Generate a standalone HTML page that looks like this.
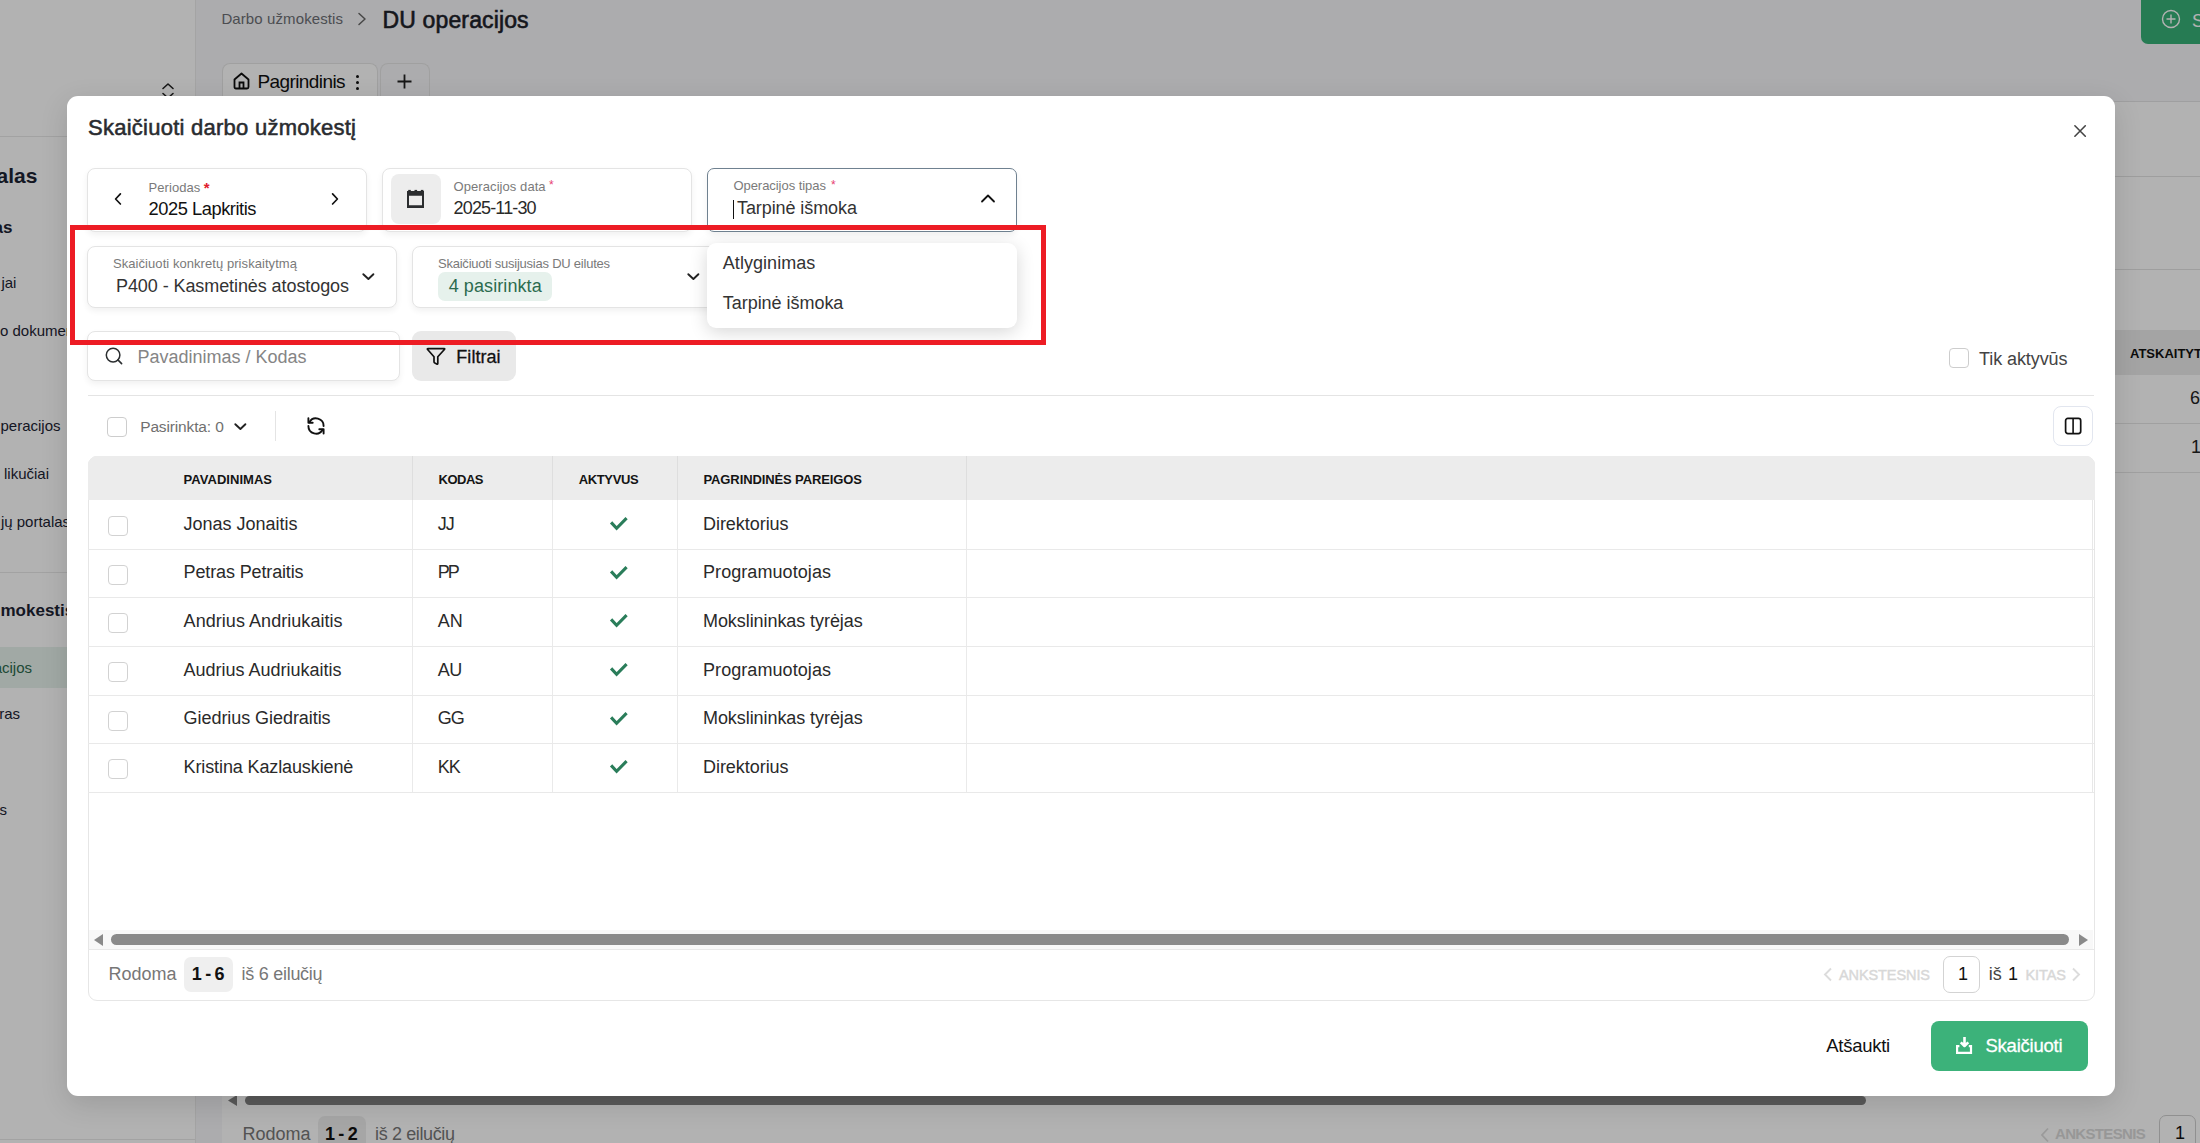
<!DOCTYPE html>
<html><head><meta charset="utf-8"><style>
html,body{margin:0;padding:0;width:2200px;height:1143px;overflow:hidden;background:#fff}
body{position:relative;font-family:"Liberation Sans",sans-serif}
.t{position:absolute;white-space:pre;line-height:1;font-family:"Liberation Sans",sans-serif}
.r{position:absolute}
</style></head><body>
<div class="r" style="left:0px;top:0px;width:2200px;height:1143px;background:#f6f6f9"></div>
<div class="r" style="left:0px;top:0px;width:195px;height:1143px;background:#fff;border-right:1px solid #ebebeb"></div>
<div class="r" style="left:0px;top:136px;width:195px;height:1px;background:#e8e8e8"></div>
<div class="r" style="left:0px;top:572px;width:195px;height:1px;background:#e8e8e8"></div>
<div class="r" style="left:0px;top:1139px;width:195px;height:1px;background:#e8e8e8"></div>
<div class="r" style="left:0px;top:647px;width:195px;height:41px;background:#e7f2ec"></div>
<div class="t" style="left:-45.40px;top:164.52px;font-size:21px;font-weight:700;color:#1c2333;letter-spacing:0.000px;">Portalas</div>
<div class="t" style="left:-83.89px;top:218.91px;font-size:17px;font-weight:700;color:#1c2333;letter-spacing:0.000px;">Nustatymas</div>
<div class="t" style="left:1.38px;top:275.30px;font-size:15px;font-weight:400;color:#1c2333;letter-spacing:0.000px;">jai</div>
<div class="t" style="left:0.00px;top:323.30px;font-size:15px;font-weight:400;color:#1c2333;letter-spacing:0.000px;">o dokumentai</div>
<div class="t" style="left:0.50px;top:418.30px;font-size:15px;font-weight:400;color:#1c2333;letter-spacing:0.000px;">peracijos</div>
<div class="t" style="left:-21.84px;top:466.30px;font-size:15px;font-weight:400;color:#1c2333;letter-spacing:0.000px;">DU likučiai</div>
<div class="t" style="left:0.88px;top:514.30px;font-size:15px;font-weight:400;color:#1c2333;letter-spacing:0.000px;">jų portalas</div>
<div class="t" style="left:0.50px;top:601.61px;font-size:17px;font-weight:700;color:#1c2333;letter-spacing:0.000px;">mokestis</div>
<div class="t" style="left:-62.20px;top:660.30px;font-size:15px;font-weight:400;color:#2c6a4c;letter-spacing:0.000px;">DU operacijos</div>
<div class="t" style="left:-48.36px;top:706.30px;font-size:15px;font-weight:400;color:#1c2333;letter-spacing:0.000px;">Struktūras</div>
<div class="t" style="left:-62.19px;top:802.30px;font-size:15px;font-weight:400;color:#1c2333;letter-spacing:0.000px;">Ataskaitos</div>
<svg class="r" style="left:160px;top:82px;" width="16" height="18" viewBox="0 0 16 18" fill="none"><path d="M3 6.5 L8 2 L13 6.5 M3 11.5 L8 16 L13 11.5" stroke="#222" stroke-width="1.6" stroke-linecap="round" stroke-linejoin="round"/></svg>
<div class="t" style="left:221.40px;top:11.40px;font-size:15px;font-weight:400;color:#6d6f75;letter-spacing:0.104px;">Darbo užmokestis</div>
<svg class="r" style="left:356px;top:12px;" width="12" height="14" viewBox="0 0 12 14" fill="none"><path d="M3 1.5 L9 7 L3 12.5" stroke="#666" stroke-width="1.5" stroke-linecap="round" stroke-linejoin="round"/></svg>
<div class="t" style="left:382.60px;top:8.93px;font-size:23px;font-weight:400;color:#1e222a;letter-spacing:0.130px;-webkit-text-stroke:0.6px #1e222a;">DU operacijos</div>
<div class="r" style="left:222px;top:63px;width:156px;height:47px;background:#fff;border:1px solid #e6e6e6;border-bottom:none;border-radius:8px 8px 0 0;box-sizing:border-box"></div>
<div class="r" style="left:380px;top:63px;width:50px;height:47px;background:#f6f6f9;border:1px solid #e6e6e6;border-bottom:none;border-radius:8px 8px 0 0;box-sizing:border-box"></div>
<svg class="r" style="left:232px;top:71px;" width="19" height="19" viewBox="0 0 19 19" fill="none"><path d="M2.5 8.5 L9.5 2.5 L16.5 8.5 V16 Q16.5 17.5 15 17.5 H4 Q2.5 17.5 2.5 16 Z" stroke="#111" stroke-width="1.8" stroke-linejoin="round"/><path d="M7.5 17.5 V11.5 H11.5 V17.5" stroke="#111" stroke-width="1.8"/></svg>
<div class="t" style="left:257.50px;top:72.42px;font-size:19px;font-weight:400;color:#111;letter-spacing:-0.600px;">Pagrindinis</div>
<div class="r" style="left:356px;top:75px;width:3px;height:3px;background:#111;border-radius:50%"></div>
<div class="r" style="left:356px;top:81px;width:3px;height:3px;background:#111;border-radius:50%"></div>
<div class="r" style="left:356px;top:87px;width:3px;height:3px;background:#111;border-radius:50%"></div>
<svg class="r" style="left:396px;top:73px;" width="17" height="17" viewBox="0 0 17 17" fill="none"><path d="M8.5 1.5 V15.5 M1.5 8.5 H15.5" stroke="#222" stroke-width="1.8"/></svg>
<div class="r" style="left:195px;top:101px;width:2005px;height:1px;background:#e4e4e6"></div>
<div class="r" style="left:222px;top:102px;width:1978px;height:1041px;background:#fff"></div>
<div class="r" style="left:2115px;top:176px;width:85px;height:1px;background:#e2e2e2"></div>
<div class="r" style="left:2115px;top:269px;width:85px;height:1px;background:#e2e2e2"></div>
<div class="r" style="left:2115px;top:330px;width:85px;height:45px;background:#ebebeb"></div>
<div class="t" style="left:2130.00px;top:346.60px;font-size:13px;font-weight:700;color:#111;letter-spacing:0.000px;">ATSKAITYTA</div>
<div class="t" style="left:2190.01px;top:388.76px;font-size:18px;font-weight:400;color:#222;letter-spacing:0.000px;">6</div>
<div class="t" style="left:2191.01px;top:437.76px;font-size:18px;font-weight:400;color:#222;letter-spacing:0.000px;">1</div>
<div class="r" style="left:2115px;top:423px;width:85px;height:1px;background:#e6e6e6"></div>
<div class="r" style="left:2115px;top:472px;width:85px;height:1px;background:#e6e6e6"></div>
<div class="r" style="left:2141px;top:-10px;width:99px;height:54px;background:#37b077;border-radius:7px"></div>
<svg class="r" style="left:2161px;top:9px;" width="20" height="20" viewBox="0 0 20 20" fill="none"><circle cx="10" cy="10" r="8.5" stroke="#fff" stroke-width="1.4"/><path d="M10 5.5 V14.5 M5.5 10 H14.5" stroke="#fff" stroke-width="1.4"/></svg>
<div class="t" style="left:2192.00px;top:11.76px;font-size:18px;font-weight:400;color:#fff;letter-spacing:0.000px;">Sukurti</div>
<div class="r" style="left:222px;top:1090px;width:1978px;height:53px;background:#fff"></div>
<svg class="r" style="left:228px;top:1095px;" width="9" height="11" viewBox="0 0 9 11" fill="none"><path d="M9 0 L0 5.5 L9 11 Z" fill="#808080"/></svg>
<div class="r" style="left:245px;top:1096px;width:1621px;height:9px;background:#808080;border-radius:5px"></div>
<div class="t" style="left:242.50px;top:1125.26px;font-size:18px;font-weight:400;color:#777;letter-spacing:-0.008px;">Rodoma</div>
<div class="r" style="left:318px;top:1116px;width:48px;height:34px;background:#eee;border-radius:7px"></div>
<div class="t" style="left:325.00px;top:1125.26px;font-size:18px;font-weight:700;color:#111;letter-spacing:-0.825px;">1 - 2</div>
<div class="t" style="left:375.00px;top:1125.26px;font-size:18px;font-weight:400;color:#777;letter-spacing:-0.369px;">iš 2 eilučių</div>
<div class="t" style="left:2055.00px;top:1126.30px;font-size:15px;font-weight:700;color:#d9d9d9;letter-spacing:-0.664px;">ANKSTESNIS</div>
<svg class="r" style="left:2040px;top:1127px;" width="10" height="16" viewBox="0 0 10 16" fill="none"><path d="M8 1.5 L2 8 L8 14.5" stroke="#ddd" stroke-width="1.8"/></svg>
<div class="r" style="left:2159px;top:1115px;width:37px;height:45px;background:#fff;border:1px solid #cfcfcf;border-radius:7px;box-sizing:border-box"></div>
<div class="t" style="left:2175.00px;top:1123.76px;font-size:18px;font-weight:400;color:#111;letter-spacing:0.000px;">1</div>
<div class="r" style="left:0px;top:0px;width:2200px;height:1143px;background:rgba(0,0,0,0.3)"></div>
<div class="r" style="left:67px;top:96px;width:2048px;height:1000px;background:#fff;border-radius:11px;box-shadow:0 8px 28px rgba(0,0,0,0.13)"></div>
<div class="t" style="left:88.00px;top:117.38px;font-size:22px;font-weight:400;color:#2a2c30;letter-spacing:0.252px;-webkit-text-stroke:0.55px #2a2c30;">Skaičiuoti darbo užmokestį</div>
<svg class="r" style="left:2064px;top:114px;" width="32" height="32" viewBox="0 0 32 32" fill="none"><path d="M10.9 11.8 L21.3 22.2 M21.3 11.8 L10.9 22.2" stroke="#444" stroke-width="1.6" stroke-linecap="round"/></svg>
<div class="r" style="left:87px;top:168px;width:280px;height:64px;background:#fff;border:1px solid #e4e4e4;border-radius:8px;box-sizing:border-box;box-shadow:0 3px 6px rgba(0,0,0,0.06)"></div>
<svg class="r" style="left:104px;top:183px;" width="32" height="32" viewBox="0 0 32 32" fill="none"><path d="M16.4 10.9 L11.6 16 L16.4 21" stroke="#111" stroke-width="1.7" stroke-linecap="round" stroke-linejoin="round"/></svg>
<svg class="r" style="left:319px;top:183px;" width="32" height="32" viewBox="0 0 32 32" fill="none"><path d="M13.6 10.9 L18.4 16 L13.6 21" stroke="#111" stroke-width="1.7" stroke-linecap="round" stroke-linejoin="round"/></svg>
<div class="t" style="left:148.60px;top:181.00px;font-size:13px;font-weight:400;color:#7a7a7a;letter-spacing:0.055px;">Periodas</div>
<div class="t" style="left:203.70px;top:179.60px;font-size:15px;font-weight:700;color:#e0202c;letter-spacing:0.000px;">*</div>
<div class="t" style="left:148.60px;top:199.71px;font-size:18.3px;font-weight:400;color:#111;letter-spacing:-0.459px;">2025 Lapkritis</div>
<div class="r" style="left:382px;top:168px;width:310px;height:64px;background:#fff;border:1px solid #e4e4e4;border-radius:8px;box-sizing:border-box;box-shadow:0 3px 6px rgba(0,0,0,0.06)"></div>
<div class="r" style="left:391px;top:174px;width:50px;height:50px;background:#ededed;border-radius:8px"></div>
<svg class="r" style="left:400px;top:183px;" width="32" height="32" viewBox="0 0 32 32" fill="none"><path fill-rule="evenodd" d="M7 8 H24 V25 H7 Z M9 12.8 H22 V22.2 H9 Z" fill="#2b2d2f"/><rect x="8.2" y="6.9" width="2.6" height="1.5" fill="#2b2d2f"/><rect x="14.5" y="6.9" width="2.6" height="1.5" fill="#2b2d2f"/><rect x="20.8" y="6.9" width="2.6" height="1.5" fill="#2b2d2f"/></svg>
<div class="t" style="left:453.60px;top:179.50px;font-size:13px;font-weight:400;color:#7a7a7a;letter-spacing:0.067px;">Operacijos data</div>
<div class="t" style="left:549.00px;top:178.84px;font-size:12px;font-weight:400;color:#e63e72;letter-spacing:0.000px;">*</div>
<div class="t" style="left:453.60px;top:198.76px;font-size:18px;font-weight:400;color:#2a2a2a;letter-spacing:-0.858px;">2025-11-30</div>
<div class="r" style="left:707px;top:168px;width:310px;height:64px;background:#fff;border:1px solid #6f8190;border-radius:7px;box-sizing:border-box;box-shadow:0 3px 6px rgba(0,0,0,0.06)"></div>
<div class="t" style="left:733.40px;top:179.30px;font-size:13px;font-weight:400;color:#7a7a7a;letter-spacing:-0.041px;">Operacijos tipas</div>
<div class="t" style="left:831.00px;top:178.84px;font-size:12px;font-weight:400;color:#e63e72;letter-spacing:0.000px;">*</div>
<div class="r" style="left:733px;top:200px;width:1px;height:19px;background:#111"></div>
<div class="t" style="left:737.00px;top:199.46px;font-size:18px;font-weight:400;color:#333;letter-spacing:-0.084px;">Tarpinė išmoka</div>
<svg class="r" style="left:980px;top:193px;" width="16" height="11" viewBox="0 0 16 11" fill="none"><path d="M2 8.5 L8 2.5 L14 8.5" stroke="#111" stroke-width="1.8" stroke-linecap="round" stroke-linejoin="round"/></svg>
<div class="r" style="left:87px;top:246px;width:310px;height:62px;background:#fff;border:1px solid #e4e4e4;border-radius:8px;box-sizing:border-box;box-shadow:0 3px 6px rgba(0,0,0,0.06)"></div>
<div class="t" style="left:113.00px;top:257.00px;font-size:13px;font-weight:400;color:#7a7a7a;letter-spacing:0.061px;">Skaičiuoti konkretų priskaitytmą</div>
<div class="t" style="left:116.00px;top:276.76px;font-size:18px;font-weight:400;color:#333;letter-spacing:-0.082px;">P400 - Kasmetinės atostogos</div>
<svg class="r" style="left:352px;top:260px;" width="32" height="32" viewBox="0 0 32 32" fill="none"><path d="M11.3 14.2 L16.4 19 L21.4 14.2" stroke="#222" stroke-width="1.9" stroke-linecap="round" stroke-linejoin="round"/></svg>
<div class="r" style="left:412px;top:246px;width:309px;height:62px;background:#fff;border:1px solid #e4e4e4;border-radius:8px;box-sizing:border-box;box-shadow:0 3px 6px rgba(0,0,0,0.06)"></div>
<div class="t" style="left:438.00px;top:257.00px;font-size:13px;font-weight:400;color:#7a7a7a;letter-spacing:-0.231px;">Skaičiuoti susijusias DU eilutes</div>
<div class="r" style="left:438px;top:272px;width:114px;height:29px;background:#e6f1ec;border-radius:7px"></div>
<div class="t" style="left:448.70px;top:276.56px;font-size:18px;font-weight:400;color:#2c6b4f;letter-spacing:0.085px;">4 pasirinkta</div>
<svg class="r" style="left:677px;top:260px;" width="32" height="32" viewBox="0 0 32 32" fill="none"><path d="M11.3 14.2 L16.4 19 L21.4 14.2" stroke="#222" stroke-width="1.9" stroke-linecap="round" stroke-linejoin="round"/></svg>
<div class="r" style="left:707px;top:243px;width:310px;height:85px;background:#fff;border-radius:9px;box-shadow:0 4px 18px rgba(0,0,0,0.16)"></div>
<div class="t" style="left:722.80px;top:254.06px;font-size:18px;font-weight:400;color:#333;letter-spacing:0.048px;">Atlyginimas</div>
<div class="t" style="left:722.80px;top:293.56px;font-size:18px;font-weight:400;color:#333;letter-spacing:-0.038px;">Tarpinė išmoka</div>
<div class="r" style="left:87px;top:331px;width:313px;height:50px;background:#fff;border:1px solid #e4e4e4;border-radius:8px;box-sizing:border-box;box-shadow:0 3px 6px rgba(0,0,0,0.06)"></div>
<svg class="r" style="left:98px;top:340px;" width="32" height="32" viewBox="0 0 32 32" fill="none"><circle cx="15.1" cy="15.1" r="6.8" stroke="#2b2e30" stroke-width="1.5"/><path d="M19.9 19.9 L23.6 23.6" stroke="#2b2e30" stroke-width="1.6" stroke-linecap="round"/></svg>
<div class="t" style="left:137.50px;top:347.76px;font-size:18px;font-weight:400;color:#858585;letter-spacing:-0.006px;">Pavadinimas / Kodas</div>
<div class="r" style="left:412px;top:331px;width:104px;height:50px;background:#e9e9e9;border-radius:9px"></div>
<svg class="r" style="left:420px;top:340px;" width="32" height="32" viewBox="0 0 32 32" fill="none"><path d="M8 8.6 H24.1 Q25.2 8.6 24.4 9.5 L17.8 16.8 V23.2 Q17.8 24.5 16.7 24 L14.9 23.1 Q14 22.6 14 21.7 V16.8 L7.6 9.5 Q6.9 8.6 8 8.6 Z" stroke="#111" stroke-width="1.7" stroke-linejoin="round"/></svg>
<div class="t" style="left:456.30px;top:347.76px;font-size:18px;font-weight:400;color:#111;letter-spacing:0.048px;-webkit-text-stroke:0.3px #111;">Filtrai</div>
<div class="r" style="left:1949px;top:348px;width:20px;height:20px;background:#fff;border:1px solid #cdcdcd;border-radius:4px;box-sizing:border-box"></div>
<div class="t" style="left:1979.00px;top:349.96px;font-size:18px;font-weight:400;color:#444;letter-spacing:-0.087px;">Tik aktyvūs</div>
<div class="r" style="left:88px;top:395px;width:2006px;height:1px;background:#e4e4e4"></div>
<div class="r" style="left:107px;top:417px;width:20px;height:20px;background:#fff;border:1px solid #cdcdcd;border-radius:4px;box-sizing:border-box"></div>
<div class="t" style="left:140.20px;top:419.18px;font-size:15.5px;font-weight:400;color:#707070;letter-spacing:-0.141px;">Pasirinkta: 0</div>
<svg class="r" style="left:224px;top:410px;" width="32" height="32" viewBox="0 0 32 32" fill="none"><path d="M11.3 14.2 L16.4 19 L21.4 14.2" stroke="#222" stroke-width="1.9" stroke-linecap="round" stroke-linejoin="round"/></svg>
<div class="r" style="left:275px;top:411px;width:1px;height:30px;background:#e4e4e4"></div>
<svg class="r" style="left:300px;top:410px;" width="32" height="32" viewBox="0 0 32 32" fill="none"><path d="M23.6 16 A7.6 7.6 0 0 0 9.4 12.2" stroke="#111" stroke-width="1.9" stroke-linecap="round"/><path d="M8.4 8.3 V12.7 H12.7" stroke="#111" stroke-width="1.9" stroke-linecap="round" stroke-linejoin="round"/><path d="M8.4 16 A7.6 7.6 0 0 0 22.6 19.8" stroke="#111" stroke-width="1.9" stroke-linecap="round"/><path d="M19.3 19.3 H23.6 V23.6" stroke="#111" stroke-width="1.9" stroke-linecap="round" stroke-linejoin="round"/></svg>
<div class="r" style="left:2053px;top:406px;width:40px;height:40px;background:#fff;border:1px solid #e2e6ef;border-radius:8px;box-sizing:border-box"></div>
<svg class="r" style="left:2057px;top:410px;" width="32" height="32" viewBox="0 0 32 32" fill="none"><rect x="8.6" y="8.4" width="15.1" height="15.2" rx="2.3" stroke="#111" stroke-width="1.7"/><path d="M16.1 8 V24" stroke="#111" stroke-width="1.6"/></svg>
<div class="r" style="left:88px;top:456px;width:2007px;height:545px;background:#fff;border:1px solid #e6e6e6;border-radius:9px;box-sizing:border-box"></div>
<div class="r" style="left:88px;top:456px;width:2007px;height:44px;background:#ececec;border-radius:9px 9px 0 0"></div>
<div class="r" style="left:412px;top:456px;width:1px;height:44px;background:#dedede"></div>
<div class="r" style="left:412px;top:500px;width:1px;height:292px;background:#eaeaea"></div>
<div class="r" style="left:552px;top:456px;width:1px;height:44px;background:#dedede"></div>
<div class="r" style="left:552px;top:500px;width:1px;height:292px;background:#eaeaea"></div>
<div class="r" style="left:677px;top:456px;width:1px;height:44px;background:#dedede"></div>
<div class="r" style="left:677px;top:500px;width:1px;height:292px;background:#eaeaea"></div>
<div class="r" style="left:966px;top:456px;width:1px;height:44px;background:#dedede"></div>
<div class="r" style="left:966px;top:500px;width:1px;height:292px;background:#eaeaea"></div>
<div class="r" style="left:2092px;top:500px;width:1px;height:292px;background:#e8e8e8"></div>
<div class="t" style="left:183.60px;top:473.30px;font-size:13px;font-weight:700;color:#141414;letter-spacing:0.029px;">PAVADINIMAS</div>
<div class="t" style="left:438.50px;top:473.30px;font-size:13px;font-weight:700;color:#141414;letter-spacing:-0.491px;">KODAS</div>
<div class="t" style="left:578.70px;top:473.30px;font-size:13px;font-weight:700;color:#141414;letter-spacing:-0.351px;">AKTYVUS</div>
<div class="t" style="left:703.50px;top:473.30px;font-size:13px;font-weight:700;color:#141414;letter-spacing:-0.111px;">PAGRINDINĖS PAREIGOS</div>
<div class="r" style="left:88px;top:549px;width:2006px;height:1px;background:#e9e9e9"></div>
<div class="r" style="left:108px;top:516px;width:20px;height:20px;background:#fff;border:1px solid #d2d2d2;border-radius:4px;box-sizing:border-box"></div>
<div class="t" style="left:183.60px;top:514.76px;font-size:18px;font-weight:400;color:#2a2a2a;letter-spacing:-0.006px;">Jonas Jonaitis</div>
<div class="t" style="left:437.70px;top:514.76px;font-size:18px;font-weight:400;color:#2a2a2a;letter-spacing:-1.000px;">JJ</div>
<div class="t" style="left:703.00px;top:514.76px;font-size:18px;font-weight:400;color:#2a2a2a;letter-spacing:-0.044px;">Direktorius</div>
<svg class="r" style="left:602px;top:507px;" width="32" height="32" viewBox="0 0 32 32" fill="none"><path d="M9.1 15.4 L14.6 21.3 L24.6 11.1" stroke="#2a7d5a" stroke-width="3.1" stroke-linejoin="miter"/></svg>
<div class="r" style="left:88px;top:597px;width:2006px;height:1px;background:#e9e9e9"></div>
<div class="r" style="left:108px;top:565px;width:20px;height:20px;background:#fff;border:1px solid #d2d2d2;border-radius:4px;box-sizing:border-box"></div>
<div class="t" style="left:183.60px;top:563.41px;font-size:18px;font-weight:400;color:#2a2a2a;letter-spacing:-0.136px;">Petras Petraitis</div>
<div class="t" style="left:437.70px;top:563.41px;font-size:18px;font-weight:400;color:#2a2a2a;letter-spacing:-2.030px;">PP</div>
<div class="t" style="left:703.00px;top:563.41px;font-size:18px;font-weight:400;color:#2a2a2a;letter-spacing:0.071px;">Programuotojas</div>
<svg class="r" style="left:602px;top:556px;" width="32" height="32" viewBox="0 0 32 32" fill="none"><path d="M9.1 15.4 L14.6 21.3 L24.6 11.1" stroke="#2a7d5a" stroke-width="3.1" stroke-linejoin="miter"/></svg>
<div class="r" style="left:88px;top:646px;width:2006px;height:1px;background:#e9e9e9"></div>
<div class="r" style="left:108px;top:613px;width:20px;height:20px;background:#fff;border:1px solid #d2d2d2;border-radius:4px;box-sizing:border-box"></div>
<div class="t" style="left:183.60px;top:612.06px;font-size:18px;font-weight:400;color:#2a2a2a;letter-spacing:0.048px;">Andrius Andriukaitis</div>
<div class="t" style="left:437.70px;top:612.06px;font-size:18px;font-weight:400;color:#2a2a2a;letter-spacing:-0.020px;">AN</div>
<div class="t" style="left:703.00px;top:612.06px;font-size:18px;font-weight:400;color:#2a2a2a;letter-spacing:-0.071px;">Mokslininkas tyrėjas</div>
<svg class="r" style="left:602px;top:604px;" width="32" height="32" viewBox="0 0 32 32" fill="none"><path d="M9.1 15.4 L14.6 21.3 L24.6 11.1" stroke="#2a7d5a" stroke-width="3.1" stroke-linejoin="miter"/></svg>
<div class="r" style="left:88px;top:695px;width:2006px;height:1px;background:#e9e9e9"></div>
<div class="r" style="left:108px;top:662px;width:20px;height:20px;background:#fff;border:1px solid #d2d2d2;border-radius:4px;box-sizing:border-box"></div>
<div class="t" style="left:183.60px;top:660.71px;font-size:18px;font-weight:400;color:#2a2a2a;letter-spacing:-0.004px;">Audrius Audriukaitis</div>
<div class="t" style="left:437.70px;top:660.71px;font-size:18px;font-weight:400;color:#2a2a2a;letter-spacing:-0.520px;">AU</div>
<div class="t" style="left:703.00px;top:660.71px;font-size:18px;font-weight:400;color:#2a2a2a;letter-spacing:0.071px;">Programuotojas</div>
<svg class="r" style="left:602px;top:653px;" width="32" height="32" viewBox="0 0 32 32" fill="none"><path d="M9.1 15.4 L14.6 21.3 L24.6 11.1" stroke="#2a7d5a" stroke-width="3.1" stroke-linejoin="miter"/></svg>
<div class="r" style="left:88px;top:743px;width:2006px;height:1px;background:#e9e9e9"></div>
<div class="r" style="left:108px;top:711px;width:20px;height:20px;background:#fff;border:1px solid #d2d2d2;border-radius:4px;box-sizing:border-box"></div>
<div class="t" style="left:183.60px;top:709.36px;font-size:18px;font-weight:400;color:#2a2a2a;letter-spacing:-0.058px;">Giedrius Giedraitis</div>
<div class="t" style="left:437.70px;top:709.36px;font-size:18px;font-weight:400;color:#2a2a2a;letter-spacing:-0.990px;">GG</div>
<div class="t" style="left:703.00px;top:709.36px;font-size:18px;font-weight:400;color:#2a2a2a;letter-spacing:-0.071px;">Mokslininkas tyrėjas</div>
<svg class="r" style="left:602px;top:702px;" width="32" height="32" viewBox="0 0 32 32" fill="none"><path d="M9.1 15.4 L14.6 21.3 L24.6 11.1" stroke="#2a7d5a" stroke-width="3.1" stroke-linejoin="miter"/></svg>
<div class="r" style="left:88px;top:792px;width:2006px;height:1px;background:#e9e9e9"></div>
<div class="r" style="left:108px;top:759px;width:20px;height:20px;background:#fff;border:1px solid #d2d2d2;border-radius:4px;box-sizing:border-box"></div>
<div class="t" style="left:183.60px;top:758.01px;font-size:18px;font-weight:400;color:#2a2a2a;letter-spacing:-0.119px;">Kristina Kazlauskienė</div>
<div class="t" style="left:437.70px;top:758.01px;font-size:18px;font-weight:400;color:#2a2a2a;letter-spacing:-1.030px;">KK</div>
<div class="t" style="left:703.00px;top:758.01px;font-size:18px;font-weight:400;color:#2a2a2a;letter-spacing:-0.044px;">Direktorius</div>
<svg class="r" style="left:602px;top:750px;" width="32" height="32" viewBox="0 0 32 32" fill="none"><path d="M9.1 15.4 L14.6 21.3 L24.6 11.1" stroke="#2a7d5a" stroke-width="3.1" stroke-linejoin="miter"/></svg>
<div class="r" style="left:89px;top:930px;width:2004px;height:19px;background:#f8f8f8"></div>
<svg class="r" style="left:94px;top:934px;" width="9" height="12" viewBox="0 0 9 12" fill="none"><path d="M9 0 L0 6 L9 12 Z" fill="#8a8a8a"/></svg>
<div class="r" style="left:111px;top:934px;width:1958px;height:11px;background:#8a8a8a;border-radius:6px"></div>
<svg class="r" style="left:2079px;top:934px;" width="9" height="12" viewBox="0 0 9 12" fill="none"><path d="M0 0 L9 6 L0 12 Z" fill="#8a8a8a"/></svg>
<div class="r" style="left:88px;top:949px;width:2006px;height:1px;background:#e8e8e8"></div>
<div class="t" style="left:108.60px;top:964.96px;font-size:18px;font-weight:400;color:#777;letter-spacing:-0.008px;">Rodoma</div>
<div class="r" style="left:184px;top:957px;width:49px;height:35px;background:#efefef;border-radius:7px"></div>
<div class="t" style="left:191.80px;top:964.96px;font-size:18px;font-weight:700;color:#111;letter-spacing:-0.825px;">1 - 6</div>
<div class="t" style="left:241.60px;top:964.96px;font-size:18px;font-weight:400;color:#777;letter-spacing:-0.278px;">iš 6 eilučių</div>
<svg class="r" style="left:1822px;top:967px;" width="12" height="15" viewBox="0 0 12 15" fill="none"><path d="M9 1.5 L3 7.5 L9 13.5" stroke="#dcdcdc" stroke-width="1.9"/></svg>
<div class="t" style="left:1839.00px;top:967.53px;font-size:14.5px;font-weight:400;color:#d8d8d8;letter-spacing:-0.095px;-webkit-text-stroke:0.45px #d8d8d8;">ANKSTESNIS</div>
<div class="r" style="left:1943px;top:956px;width:37px;height:37px;background:#fff;border:1px solid #d3d3d3;border-radius:7px;box-sizing:border-box"></div>
<div class="t" style="left:1958.00px;top:964.56px;font-size:18px;font-weight:400;color:#111;letter-spacing:0.000px;">1</div>
<div class="t" style="left:1988.80px;top:964.56px;font-size:18px;font-weight:400;color:#444;letter-spacing:0.000px;">iš</div>
<div class="t" style="left:2008.00px;top:964.56px;font-size:18px;font-weight:400;color:#111;letter-spacing:0.000px;">1</div>
<div class="t" style="left:2025.50px;top:967.53px;font-size:14.5px;font-weight:400;color:#d8d8d8;letter-spacing:-0.079px;-webkit-text-stroke:0.45px #d8d8d8;">KITAS</div>
<svg class="r" style="left:2070px;top:967px;" width="12" height="15" viewBox="0 0 12 15" fill="none"><path d="M3 1.5 L9 7.5 L3 13.5" stroke="#dcdcdc" stroke-width="1.9"/></svg>
<div class="t" style="left:1826.20px;top:1036.54px;font-size:18.5px;font-weight:400;color:#111;letter-spacing:-0.259px;">Atšaukti</div>
<div class="r" style="left:1931px;top:1021px;width:157px;height:50px;background:#3cb27a;border-radius:8px"></div>
<svg class="r" style="left:1948px;top:1029px;" width="32" height="32" viewBox="0 0 32 32" fill="none"><path d="M16.5 8.1 V16 M12.8 13.4 L16.5 17 L20.3 13.4" stroke="#fff" stroke-width="2.6" stroke-linejoin="round"/><path d="M11.4 17.1 H9.1 V23.8 H23 V17.1 H20.8" stroke="#fff" stroke-width="2.2"/></svg>
<div class="t" style="left:1985.50px;top:1036.54px;font-size:18.5px;font-weight:400;color:#fff;letter-spacing:-0.242px;-webkit-text-stroke:0.3px #fff;">Skaičiuoti</div>
<div class="r" style="left:70px;top:225px;width:976px;height:120px;border:5px solid #ed1c24;box-sizing:border-box"></div>
</body></html>
